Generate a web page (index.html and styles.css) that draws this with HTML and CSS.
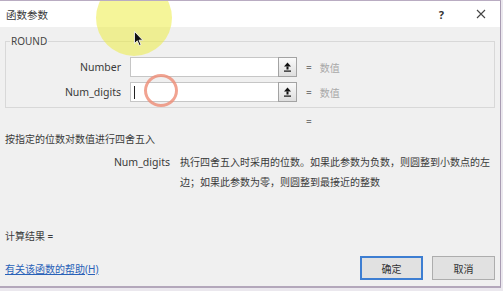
FILE: index.html
```html
<!DOCTYPE html>
<html lang="zh-CN">
<head>
    <meta charset="UTF-8">
    <title>函数参数</title>
    <link rel="stylesheet" href="styles.css">
</head>
<body>

<div class="window">
    <div class="titlebar">
        <span class="title">函数参数</span>
        <span class="help">?</span>
        <span class="close">
            <svg width="10" height="10" viewBox="0 0 10 10"><path d="M1 1L9 9M9 1L1 9" stroke="#444" stroke-width="1.1"/></svg>
        </span>
    </div>

    <div class="content">
        <fieldset class="group">
            <legend>ROUND</legend>
            <div class="arg-row">
                <label class="arg-label">Number</label>
                <div class="arg-input"></div>
                <button class="ref-btn">
                    <svg width="9" height="10" viewBox="0 0 9 10"><path d="M4.5 0.5L8 4.5H1Z" fill="#111"/><rect x="3.5" y="4.5" width="2" height="3" fill="#111"/><rect x="1" y="8.5" width="7" height="1.2" fill="#111"/></svg>
                </button>
                <span class="eq">=</span>
                <span class="hint">数值</span>
            </div>
            <div class="arg-row">
                <label class="arg-label">Num_digits</label>
                <div class="arg-input"><span class="caret"></span></div>
                <button class="ref-btn">
                    <svg width="9" height="10" viewBox="0 0 9 10"><path d="M4.5 0.5L8 4.5H1Z" fill="#111"/><rect x="3.5" y="4.5" width="2" height="3" fill="#111"/><rect x="1" y="8.5" width="7" height="1.2" fill="#111"/></svg>
                </button>
                <span class="eq">=</span>
                <span class="hint">数值</span>
            </div>
        </fieldset>

        <div class="result-eq">=</div>

        <div class="summary">按指定的位数对数值进行四舍五入</div>

        <div class="arg-help">
            <span class="arg-help-name">Num_digits</span>
            <span class="arg-help-text">执行四舍五入时采用的位数。如果此参数为负数，则圆整到小数点的左<br>边；如果此参数为零，则圆整到最接近的整数</span>
        </div>

        <div class="calc">计算结果 =</div>

        <div class="footer">
            <a class="help-link" href="#">有关该函数的帮助(H)</a>
            <div class="buttons">
                <button class="button button-default">确定</button>
                <button class="button">取消</button>
            </div>
        </div>
    </div>

    <div class="spot"></div>
    <div class="click-ring"></div>
    <svg class="pointer" width="10" height="16" viewBox="0 0 10 16"><path d="M0.5 0.5V12.5L3.3 9.8L5.3 14.5L7 13.7L5 9.2H8.8Z" fill="#111" stroke="#fff" stroke-width="0.8"/></svg>
</div>

</body>
</html>
```

FILE: styles.css
```css
html {
    background-color: #ebe8ee;
}

body {
    margin: 0;
    padding: 0;
    font-family: "Noto Sans", "Noto Sans CJK SC", sans-serif;
    font-size: 10px;
    color: #3a3a3a;
    overflow: hidden;
}

.window {
    position: relative;
    width: 500px;
    border-top: 1px solid #b9acc2;
    border-right: 1px solid #a99cb3;
    border-bottom: 2px solid #b3a7bb;
    background-color: #f0f0f0;
    overflow: hidden;
}

.titlebar {
    display: flex;
    align-items: center;
    height: 26px;
    background-color: #fff;
    padding-left: 6px;
}

.title {
    font-size: 10.5px;
    flex: 1;
}

.help {
    font-weight: bold;
    font-size: 11px;
    color: #333;
    margin-right: 32px;
}

.close {
    display: flex;
    margin-right: 14px;
}

.content {
    padding: 7px 5px 6px 5px;
}

.group {
    margin: 0;
    padding: 9px 0 5px 0;
    border: 1px solid #d8d8d8;
}

.group legend {
    margin-left: 4px;
    padding: 0 1px;
    line-height: 14px;
    font-size: 10px;
    color: #444;
}

.arg-row {
    display: flex;
    align-items: center;
    height: 20px;
}

.arg-row + .arg-row {
    margin-top: 5px;
}

.arg-label {
    width: 115px;
    text-align: right;
    margin-right: 9px;
    font-size: 10.5px;
}

.arg-input {
    display: flex;
    align-items: center;
    box-sizing: border-box;
    width: 148px;
    height: 20px;
    background-color: #fff;
    border: 1px solid #c6c6c6;
    border-right: none;
}

.caret {
    width: 1px;
    height: 13px;
    margin-left: 3px;
    background-color: #222;
}

.ref-btn {
    display: flex;
    align-items: center;
    justify-content: center;
    box-sizing: border-box;
    width: 19px;
    height: 20px;
    padding: 0;
    border: 1px solid #a3a3a3;
    background: linear-gradient(#fafafa, #dedede);
}

.eq {
    margin-left: 9px;
    color: #777;
}

.hint {
    margin-left: 8px;
    color: #a8a8a8;
}

.result-eq {
    margin: 6px 0 0 301px;
    line-height: 14px;
    color: #777;
}

.summary {
    margin-top: 4px;
    line-height: 14px;
}

.arg-help {
    display: flex;
    margin-top: 6px;
    line-height: 20px;
}

.arg-help-name {
    width: 165px;
    text-align: right;
    margin-right: 10px;
    font-size: 10.5px;
}

.arg-help-text {
    white-space: nowrap;
}

.calc {
    margin-top: 37px;
    line-height: 14px;
}

.footer {
    display: flex;
    align-items: center;
    justify-content: space-between;
    margin-top: 13px;
    height: 24px;
}

.help-link {
    color: #2a62b8;
    text-decoration: underline;
}

.buttons {
    display: flex;
    gap: 9px;
}

.button {
    box-sizing: border-box;
    width: 63px;
    height: 24px;
    padding: 0;
    border: 1px solid #adadad;
    background-color: #e1e1e1;
    font-family: "Noto Sans", "Noto Sans CJK SC", sans-serif;
    font-size: 10px;
    color: #333;
}

.button-default {
    border: 2px solid #3d7ed2;
}

/* screen recorder overlays */
.spot {
    position: absolute;
    left: 96px;
    top: -21px;
    width: 76px;
    height: 76px;
    border-radius: 50%;
    background-color: rgba(236, 236, 70, 0.55);
}

.click-ring {
    position: absolute;
    left: 144px;
    top: 73px;
    width: 28px;
    height: 27px;
    border: 3px solid rgba(238, 140, 118, 0.8);
    border-radius: 50%;
}

.pointer {
    position: absolute;
    left: 134px;
    top: 30px;
}
```
